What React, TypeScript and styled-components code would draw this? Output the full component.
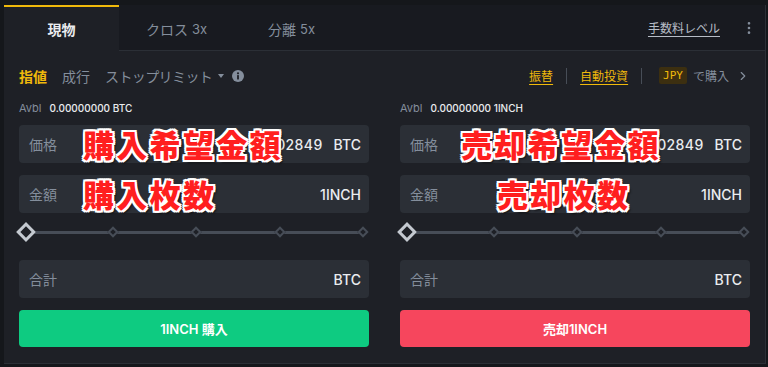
import React from "react";
import styled, { createGlobalStyle } from "styled-components";
import { ChevronRight, EllipsisVertical } from "lucide-react";

const GlobalStyle = createGlobalStyle`
  html, body { margin: 0; padding: 0; background: #15171b; }
  body { font-family: Inter, "Noto Sans CJK JP", sans-serif; }
`;

// --- Frame ---

const Screen = styled.div`
  width: 768px;
  height: 367px;
  box-sizing: border-box;
  padding: 5px 2px 3px 4px;
  background: #15171b;
  overflow: hidden;
`;

const Panel = styled.div`
  height: 100%;
  box-sizing: border-box;
  background: #1e2026;
  border-right: 1px solid #2b2f36;
  border-bottom: 1px solid #2b2f36;
  display: flex;
  flex-direction: column;
`;

// --- Tabs ---

const TabBar = styled.div`
  display: flex;
  height: 46px;
  flex-shrink: 0;
  background: #181a20;
`;

const Tab = styled.div<{ $active?: boolean }>`
  width: 115px;
  box-sizing: border-box;
  display: flex;
  align-items: center;
  justify-content: center;
  gap: 4px;
  font-size: 14px;
  font-weight: ${(p) => (p.$active ? 600 : 400)};
  color: ${(p) => (p.$active ? "#eaecef" : "#848e9c")};
  background: ${(p) => (p.$active ? "#1e2026" : "transparent")};
  border-top: 2px solid ${(p) => (p.$active ? "#f0b90b" : "transparent")};
  border-bottom: 1px solid ${(p) => (p.$active ? "transparent" : "#2b2f36")};
`;

const Lev = styled.span`
  font-size: 13px;
`;

const TabRest = styled.div`
  flex: 1;
  display: flex;
  align-items: center;
  justify-content: flex-end;
  gap: 21px;
  padding-right: 8px;
  border-bottom: 1px solid #2b2f36;
`;

const FeeLink = styled.span`
  font-size: 12px;
  color: #b7bdc6;
  text-decoration: underline;
  text-underline-offset: 3px;
`;

const MoreIcon = styled(EllipsisVertical)`
  color: #848e9c;
`;

// --- Order type row ---

const OrderRow = styled.div`
  height: 49px;
  flex-shrink: 0;
  display: flex;
  align-items: center;
  padding: 0 15px;
  font-size: 14px;
`;

const OrderType = styled.span<{ $active?: boolean }>`
  color: ${(p) => (p.$active ? "#f0b90b" : "#848e9c")};
  font-weight: ${(p) => (p.$active ? 600 : 400)};
  margin-right: 15px;
  display: flex;
  align-items: center;
`;

const Katakana = styled.span`
  letter-spacing: -0.6px;
`;

const Caret = styled.span`
  width: 0;
  height: 0;
  margin: 0 8px 0 6px;
  border-left: 3.5px solid transparent;
  border-right: 3.5px solid transparent;
  border-top: 4px solid #848e9c;
`;

const Spacer = styled.div`
  flex: 1;
`;

const ActionLink = styled.span`
  color: #f0b90b;
  font-size: 12px;
  text-decoration: underline;
  text-underline-offset: 3px;
`;

const Divider = styled.span`
  width: 1px;
  height: 16px;
  background: #474d57;
  margin: 0 13px;
`;

const Badge = styled.span`
  background: #3c2f10;
  color: #f0b90b;
  font-family: "DejaVu Sans Mono", monospace;
  font-size: 11px;
  padding: 2px 4px;
  border-radius: 2px;
  margin: 0 6px 0 4px;
`;

const BuyVia = styled.span`
  color: #848e9c;
  font-size: 12px;
`;

const Chevron = styled(ChevronRight)`
  color: #848e9c;
  margin-left: 7px;
`;

// --- Forms ---

const Columns = styled.div`
  display: flex;
  gap: 31px;
  padding: 0 15px;
`;

const Form = styled.div`
  flex: 1;
  display: flex;
  flex-direction: column;
`;

const Avbl = styled.div`
  height: 16px;
  display: flex;
  align-items: center;
  gap: 8px;
  font-size: 11px;
  color: #848e9c;
  margin-bottom: 9px;
  b {
    color: #eaecef;
    font-size: 10px;
    font-weight: 500;
  }
`;

const Field = styled.div<{ $gap?: number }>`
  position: relative;
  height: 38px;
  display: flex;
  align-items: center;
  padding: 0 8px 0 10px;
  border-radius: 4px;
  background: #2b2f36;
  font-size: 14px;
  margin-top: ${(p) => p.$gap ?? 0}px;
`;

const Label = styled.span`
  color: #848e9c;
`;

const Value = styled.span`
  color: #eaecef;
  font-weight: 500;
  margin-left: auto;
`;

const Price = styled(Value)`
  letter-spacing: 0.4px;
`;

const Unit = styled.span`
  color: #eaecef;
  font-weight: 500;
  margin-left: 11px;
`;

const Note = styled.span<{ $left: number }>`
  position: absolute;
  left: ${(p) => p.$left}px;
  top: 50%;
  transform: translateY(-52%);
  font-family: "Noto Sans CJK JP", sans-serif;
  font-size: 31px;
  font-weight: 900;
  letter-spacing: 2.3px;
  color: #ff1f1f;
  white-space: nowrap;
  text-shadow:
    2px 0 0 #fff, -2px 0 0 #fff, 0 2px 0 #fff, 0 -2px 0 #fff,
    2px 2px 0 #fff, -2px -2px 0 #fff, 2px -2px 0 #fff, -2px 2px 0 #fff,
    3px 3px 2px rgba(0, 0, 0, 0.6);
`;

const Slider = styled.div`
  height: 38px;
  display: flex;
  align-items: center;
  padding: 0 2px 0 0;
`;

const Knob = styled.span`
  width: 8px;
  height: 8px;
  border: 3px solid #c4c9d0;
  background: #1e2026;
  transform: rotate(45deg);
  flex-shrink: 0;
`;

const Tick = styled.span`
  width: 4px;
  height: 4px;
  border: 2px solid #474d57;
  background: #1e2026;
  transform: rotate(45deg);
  flex-shrink: 0;
`;

const Track = styled.span`
  flex: 1;
  height: 3px;
  background: #474d57;
`;

const SubmitButton = styled.button<{ $side: "buy" | "sell" }>`
  height: 37px;
  margin-top: 12px;
  border: none;
  border-radius: 4px;
  background: ${(p) => (p.$side === "buy" ? "#0ecb81" : "#f6465d")};
  color: #fff;
  font-family: Inter, "Noto Sans CJK JP", sans-serif;
  font-size: 13px;
  font-weight: 600;
`;

type FormProps = {
  side: "buy" | "sell";
  balance: string;
  priceNote: string;
  priceLeft: number;
  amountNote: string;
  amountLeft: number;
  button: string;
};

const OrderForm: React.FC<FormProps> = (p) => (
  <Form>
    <Avbl>
      Avbl <b>{p.balance}</b>
    </Avbl>
    <Field>
      <Label>価格</Label>
      <Price>0.00002849</Price>
      <Unit>BTC</Unit>
      <Note $left={p.priceLeft}>{p.priceNote}</Note>
    </Field>
    <Field $gap={12}>
      <Label>金額</Label>
      <Value>1INCH</Value>
      <Note $left={p.amountLeft}>{p.amountNote}</Note>
    </Field>
    <Slider>
      <Knob />
      <Track />
      <Tick />
      <Track />
      <Tick />
      <Track />
      <Tick />
      <Track />
      <Tick />
    </Slider>
    <Field $gap={9}>
      <Label>合計</Label>
      <Value>BTC</Value>
    </Field>
    <SubmitButton $side={p.side}>{p.button}</SubmitButton>
  </Form>
);

const InfoIcon = () => (
  <svg width="12" height="12" viewBox="0 0 12 12">
    <circle cx="6" cy="6" r="6" fill="#848e9c" />
    <circle cx="6" cy="3.3" r="1.1" fill="#1e2026" />
    <rect x="5.1" y="5" width="1.8" height="4.4" rx="0.5" fill="#1e2026" />
  </svg>
);

const App: React.FC = () => (
  <Screen>
    <GlobalStyle />
    <Panel>
      <TabBar>
        <Tab $active>現物</Tab>
        <Tab>
          クロス <Lev>3x</Lev>
        </Tab>
        <Tab>
          分離 <Lev>5x</Lev>
        </Tab>
        <TabRest>
          <FeeLink>手数料レベル</FeeLink>
          <MoreIcon size={16} />
        </TabRest>
      </TabBar>

      <OrderRow>
        <OrderType $active>指値</OrderType>
        <OrderType>成行</OrderType>
        <OrderType>
          <Katakana>ストップリミット</Katakana>
          <Caret />
          <InfoIcon />
        </OrderType>
        <Spacer />
        <ActionLink>振替</ActionLink>
        <Divider />
        <ActionLink>自動投資</ActionLink>
        <Divider />
        <Badge>JPY</Badge>
        <BuyVia>で購入</BuyVia>
        <Chevron size={14} />
      </OrderRow>

      <Columns>
        <OrderForm
          side="buy"
          balance="0.00000000 BTC"
          priceNote="購入希望金額"
          priceLeft={64}
          amountNote="購入枚数"
          amountLeft={64}
          button="1INCH 購入"
        />
        <OrderForm
          side="sell"
          balance="0.00000000 1INCH"
          priceNote="売却希望金額"
          priceLeft={61}
          amountNote="売却枚数"
          amountLeft={97}
          button="売却1INCH"
        />
      </Columns>
    </Panel>
  </Screen>
);

export default App;
